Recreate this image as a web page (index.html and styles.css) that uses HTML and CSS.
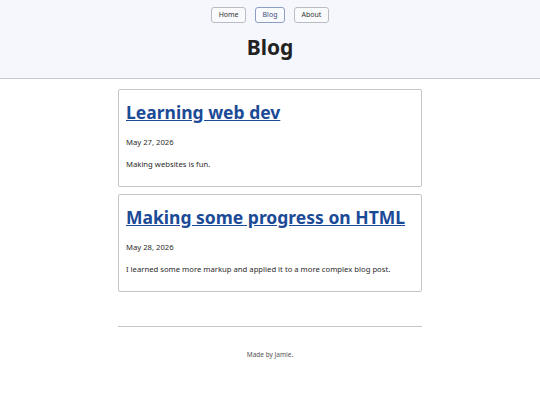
FILE: index.html
```html
<!DOCTYPE html>
<html lang="en">
<head>
    <meta charset="UTF-8">
    <meta name="viewport" content="width=device-width, initial-scale=1.0">
    <title>Blog</title>
    <link rel="stylesheet" href="styles.css">
</head>
<body>

<header class="site-header">
    <nav class="nav">
        <a class="nav-btn" href="#">Home</a>
        <a class="nav-btn active" href="#">Blog</a>
        <a class="nav-btn" href="#">About</a>
    </nav>
    <h1>Blog</h1>
</header>

<main class="posts">
    <article class="post">
        <h2><a href="#">Learning web dev</a></h2>
        <p class="date">May 27, 2026</p>
        <p>Making websites is fun.</p>
    </article>
    <article class="post">
        <h2><a href="#">Making some progress on HTML</a></h2>
        <p class="date">May 28, 2026</p>
        <p>I learned some more markup and applied it to a more complex blog post.</p>
    </article>
</main>

<footer class="site-footer">
    <hr>
    <p>Made by Jamie.</p>
</footer>

</body>
</html>
```

FILE: styles.css
```css
body {
    font-family: "Noto Sans", "Open Sans", sans-serif;
    margin: 0;
    background-color: #fff;
    color: #222;
}
.site-header {
    background-color: #f5f7fd;
    border-bottom: 1px solid #c7cad3;
    padding: 7px 0 0;
    height: 71px;
    text-align: center;
}
.nav {
    display: flex;
    justify-content: center;
    gap: 9px;
}
.nav-btn {
    font-size: 7px;
    color: #333;
    text-decoration: none;
    border: 1px solid #b9bcc6;
    border-radius: 3px;
    background-color: #f9fafc;
    padding: 2px 6.5px;
    line-height: 10px;
}
.nav-btn.active {
    border-color: #8c9ec4;
    color: #3a4f80;
}
h1 {
    font-size: 21px;
    margin: 9px 0 0;
    line-height: 30px;
}
.posts {
    width: 304px;
    margin: 10px auto 0;
    display: flex;
    flex-direction: column;
    gap: 7px;
}
.post {
    border: 1px solid #c3c5cb;
    border-radius: 2px;
    padding: 6px 7px 16px;
}
.post h2 {
    font-size: 17.5px;
    line-height: 24px;
    margin: 4px 0 12px;
}
.post h2 a {
    color: #1b4a96;
}
.post p {
    font-size: 7.7px;
    margin: 0 0 10px;
    line-height: 12px;
    color: #2b2b2b;
}
.post p:last-child {
    margin-bottom: 0;
}
.site-footer {
    width: 304px;
    margin: 34px auto 0;
    text-align: center;
}
.site-footer hr {
    border: none;
    border-top: 1px solid #c3c5cb;
    margin: 0;
}
.site-footer p {
    font-size: 6.5px;
    line-height: 9px;
    color: #555;
    margin: 23px 0 0;
}
```
